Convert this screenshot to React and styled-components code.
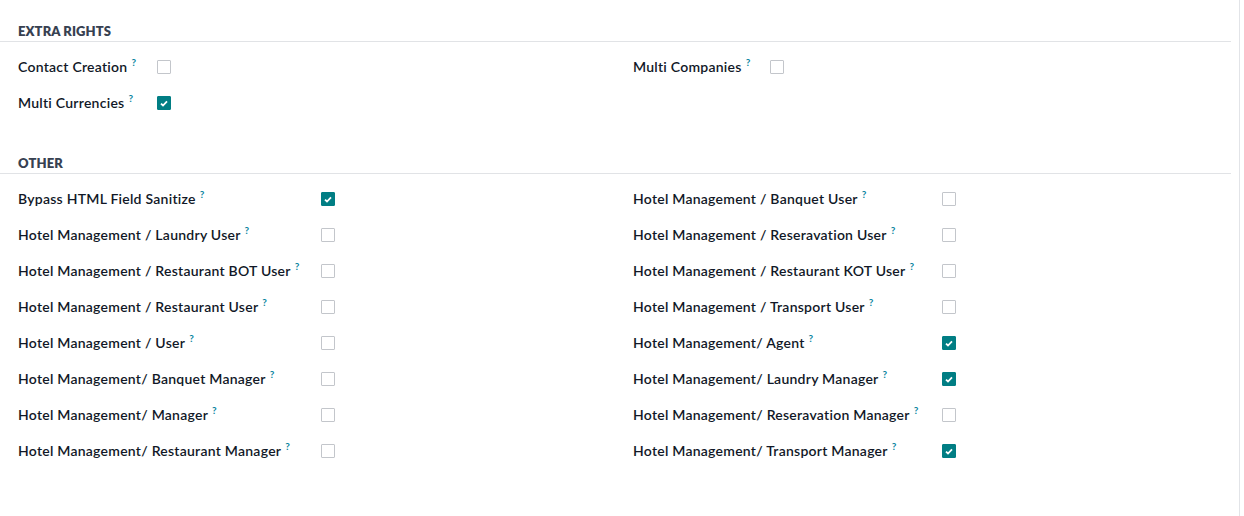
import React from 'react';
import styled, { createGlobalStyle } from 'styled-components';

const Global = createGlobalStyle`
  body {
    margin: 0;
    background: #fff;
    font-family: Lato, "Open Sans", sans-serif;
  }
`;

const Sheet = styled.div`
  width: 1240px;
  min-height: 516px;
  border-right: 1px solid #e2e4e8;
  box-sizing: border-box;
  padding-top: 21px;
`;

const Section = styled.section`
  width: 1231px;
  & + & {
    margin-top: 32px;
  }
`;

const Separator = styled.div`
  height: 20px;
  line-height: 20px;
  padding-left: 18px;
  border-bottom: 1px solid #e1e3e6;
  font-size: 13px;
  font-weight: 800;
  letter-spacing: 0.1px;
  color: #374151;
  text-transform: uppercase;
`;

const Columns = styled.div`
  display: grid;
  grid-template-columns: 615px 616px;
  padding-top: 7px;
`;

const Column = styled.div`
  padding-left: 18px;
  display: grid;
  grid-template-columns: ${(p) => p.$labelWidth}px 1fr;
  grid-auto-rows: 36px;
  align-items: center;
`;

const Label = styled.label`
  font-size: 14px;
  font-weight: 600;
  letter-spacing: 0.25px;
  color: #111827;
  white-space: nowrap;
  padding-bottom: 2px;
`;

const Help = styled.sup`
  font-size: 10px;
  font-weight: 700;
  color: #0a84a0;
  margin-left: 4px;
  vertical-align: 6px;
  line-height: 0;
`;

const Box = styled.span`
  width: 14px;
  height: 14px;
  box-sizing: border-box;
  border: 1px solid ${(p) => (p.$on ? '#017e84' : '#c3c6cb')};
  background: ${(p) => (p.$on ? '#017e84' : '#fff')};
  border-radius: 1px;
  display: flex;
  align-items: center;
  justify-content: center;
`;

const Check = ({ on }) => (
  <Box $on={on}>
    {on && (
      <svg width="8" height="7" viewBox="0 0 8 7">
        <path d="M1 3.6 L3 5.5 L7 1.3" fill="none" stroke="#fff" strokeWidth="1.8" />
      </svg>
    )}
  </Box>
);

const Field = ({ label, on }) => (
  <>
    <Label>
      {label}
      <Help>?</Help>
    </Label>
    <Check on={on} />
  </>
);

const Group = ({ title, left, right, leftWidth, rightWidth }) => (
  <Section>
    <Separator>{title}</Separator>
    <Columns>
      <Column $labelWidth={leftWidth}>
        {left.map(([l, on]) => (
          <Field key={l} label={l} on={on} />
        ))}
      </Column>
      <Column $labelWidth={rightWidth}>
        {right.map(([l, on]) => (
          <Field key={l} label={l} on={on} />
        ))}
      </Column>
    </Columns>
  </Section>
);

const otherLeft = [
  ['Bypass HTML Field Sanitize', true],
  ['Hotel Management / Laundry User', false],
  ['Hotel Management / Restaurant BOT User', false],
  ['Hotel Management / Restaurant User', false],
  ['Hotel Management / User', false],
  ['Hotel Management/ Banquet Manager', false],
  ['Hotel Management/ Manager', false],
  ['Hotel Management/ Restaurant Manager', false],
];

const otherRight = [
  ['Hotel Management / Banquet User', false],
  ['Hotel Management / Reseravation User', false],
  ['Hotel Management / Restaurant KOT User', false],
  ['Hotel Management / Transport User', false],
  ['Hotel Management/ Agent', true],
  ['Hotel Management/ Laundry Manager', true],
  ['Hotel Management/ Reseravation Manager', false],
  ['Hotel Management/ Transport Manager', true],
];

const App = () => (
  <>
    <Global />
    <Sheet>
      <Group
        title="Extra Rights"
        left={[
          ['Contact Creation', false],
          ['Multi Currencies', true],
        ]}
        right={[['Multi Companies', false]]}
        leftWidth={139}
        rightWidth={137}
      />
      <Group
        title="Other"
        left={otherLeft}
        right={otherRight}
        leftWidth={303}
        rightWidth={309}
      />
    </Sheet>
  </>
);

export default App;
